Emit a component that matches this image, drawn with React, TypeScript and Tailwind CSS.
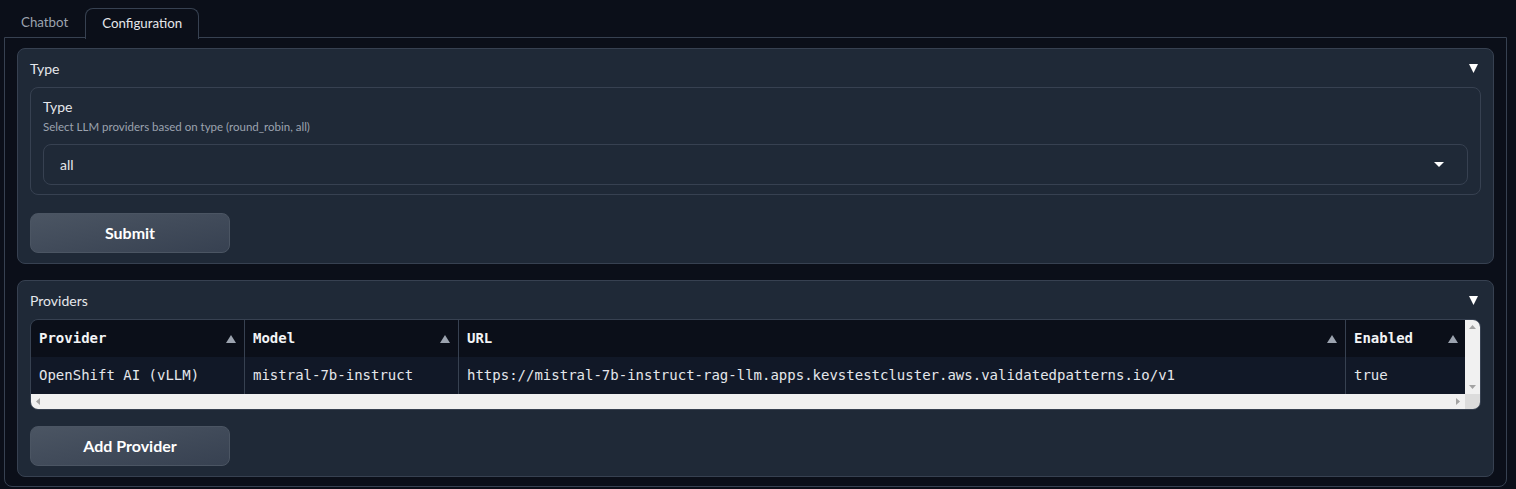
import React from "react";

const columns = [
  { name: "Provider", width: "w-[213px]", value: "OpenShift AI (vLLM)" },
  { name: "Model", width: "w-[214px]", value: "mistral-7b-instruct" },
  {
    name: "URL",
    width: "w-[887px]",
    value:
      "https://mistral-7b-instruct-rag-llm.apps.kevstestcluster.aws.validatedpatterns.io/v1",
  },
  { name: "Enabled", width: "w-[121px]", value: "true" },
];

function Caret() {
  return (
    <svg width="9" height="9" viewBox="0 0 9 9" className="fill-white">
      <path d="M0 0 L9 0 L4.5 9 Z" />
    </svg>
  );
}

function SortArrow() {
  return (
    <svg width="10" height="8" viewBox="0 0 10 8" className="fill-[#9ca3af]">
      <path d="M5 0 L10 8 L0 8 Z" />
    </svg>
  );
}

function SecondaryButton({ label }: { label: string }) {
  return (
    <button className="w-[200px] h-[40px] rounded-lg border border-[#4b5563] bg-gradient-to-br from-[#4b5563] to-[#374151] text-white font-bold text-[16px]">
      {label}
    </button>
  );
}

function AccordionHeader({ label }: { label: string }) {
  return (
    <div className="h-[38px] flex items-center justify-between text-[14px] text-[#e5e7eb]">
      <span>{label}</span>
      <span className="mr-[3px]">
        <Caret />
      </span>
    </div>
  );
}

export default function App() {
  return (
    <div className="min-h-[489px] bg-[#0b0f19] pt-2 pl-1 pr-[9px] font-['Lato','Noto_Sans',sans-serif]">
      {/* Tabs */}
      <div className="flex h-[30px] text-[13.3px]">
        <div className="px-[17px] flex items-center text-[#9ca3af]">Chatbot</div>
        <div className="px-4 flex items-center text-[#e5e7eb] border border-b-0 border-[#374151] rounded-t-lg bg-[#0b0f19] relative z-10 h-[31px]">
          Configuration
        </div>
      </div>
      {/* Tab content */}
      <div className="border border-[#374151] rounded-b-lg -mt-px px-3 pt-[10px] pb-[9px]">
        {/* Type block */}
        <div className="border border-[#374151] rounded-lg bg-[#1f2937] px-3 pb-[10px]">
          <AccordionHeader label="Type" />
          <div className="border border-[#374151] rounded-lg px-3 pt-[9px] pb-[9px]">
            <div className="text-[14px] leading-[20px] text-[#e5e7eb]">Type</div>
            <div className="text-[11.5px] leading-[16px] mt-[2px] text-[#9ca3af]">
              Select LLM providers based on type (round_robin, all)
            </div>
            <div className="mt-[9px] h-[41px] border border-[#374151] rounded-lg flex items-center justify-between pl-4 pr-[23px] text-[14px] text-[#e5e7eb]">
              <span>all</span>
              <svg width="10" height="5" viewBox="0 0 10 5" className="fill-white">
                <path d="M0 0 L10 0 L5 5 Z" />
              </svg>
            </div>
          </div>
          <div className="mt-[18px]">
            <SecondaryButton label="Submit" />
          </div>
        </div>

        {/* Providers block */}
        <div className="mt-[16px] border border-[#374151] rounded-lg bg-[#1f2937] px-3 pb-[10px]">
          <AccordionHeader label="Providers" />
          <div className="border border-[#374151] rounded-lg overflow-hidden font-['DejaVu_Sans_Mono','Liberation_Mono',monospace] text-[14px]">
            <div className="flex">
              <div className="flex-1 overflow-hidden">
                <div className="flex h-[37px] bg-[#0b0f19] font-bold text-[#f3f4f6]">
                  {columns.map((c, i) => (
                    <div
                      key={c.name}
                      className={`${c.width} shrink-0 flex items-center justify-between pl-2 pr-[8px] ${
                        i > 0 ? "border-l border-[#374151]" : ""
                      }`}
                    >
                      <span>{c.name}</span>
                      <SortArrow />
                    </div>
                  ))}
                </div>
                <div className="flex h-[37px] bg-[#111827] text-[#e5e7eb]">
                  {columns.map((c, i) => (
                    <div
                      key={c.name}
                      className={`${c.width} shrink-0 flex items-center pl-2 whitespace-nowrap ${
                        i > 0 ? "border-l border-[#374151]" : ""
                      }`}
                    >
                      {c.value}
                    </div>
                  ))}
                </div>
              </div>
              {/* vertical scrollbar */}
              <div className="w-[15px] bg-[#f1f1f1] flex flex-col items-center justify-between py-[5px]">
                <svg width="7" height="4" viewBox="0 0 7 4" className="fill-[#a3a3a3]">
                  <path d="M3.5 0 L7 4 L0 4 Z" />
                </svg>
                <svg width="7" height="4" viewBox="0 0 7 4" className="fill-[#a3a3a3]">
                  <path d="M0 0 L7 0 L3.5 4 Z" />
                </svg>
              </div>
            </div>
            {/* horizontal scrollbar */}
            <div className="flex h-[15px]">
              <div className="flex-1 bg-[#f1f1f1] flex items-center justify-between px-[5px]">
                <svg width="4" height="7" viewBox="0 0 4 7" className="fill-[#a3a3a3]">
                  <path d="M0 3.5 L4 0 L4 7 Z" />
                </svg>
                <svg width="4" height="7" viewBox="0 0 4 7" className="fill-[#a3a3a3]">
                  <path d="M0 0 L4 3.5 L0 7 Z" />
                </svg>
              </div>
              <div className="w-[15px] bg-[#dcdcdc]"></div>
            </div>
          </div>
          <div className="mt-[16px]">
            <SecondaryButton label="Add Provider" />
          </div>
        </div>
      </div>
    </div>
  );
}
